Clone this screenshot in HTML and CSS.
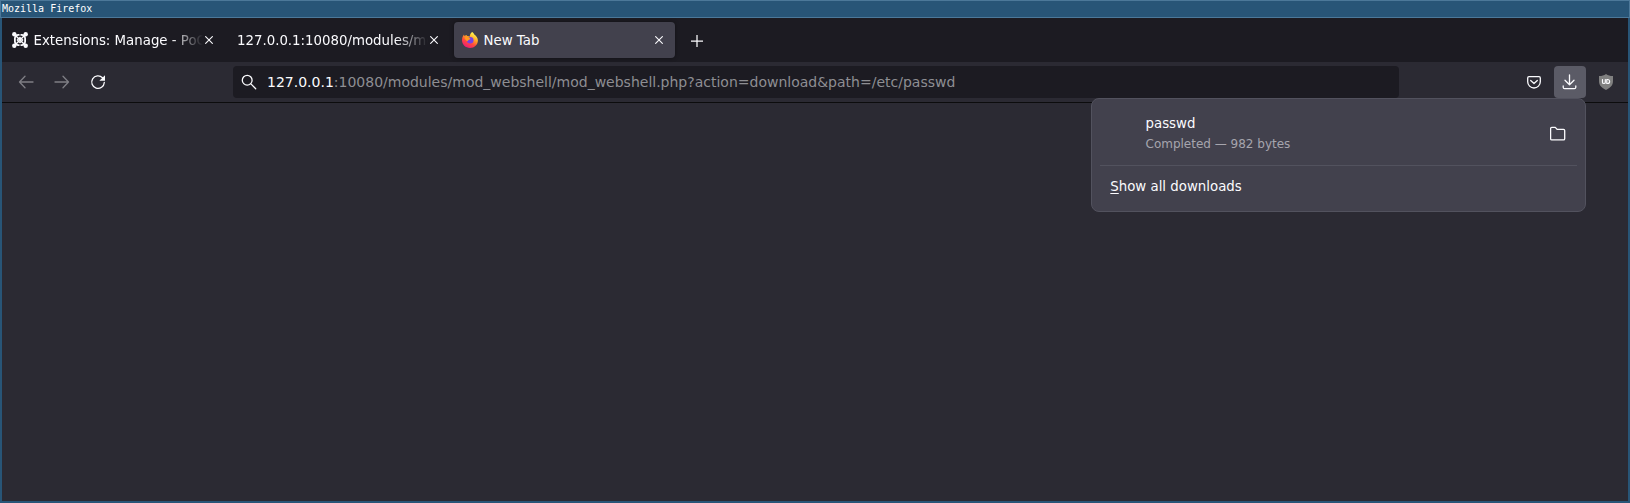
FILE: index.html
```
<!DOCTYPE html>
<html lang="en">
<head>
<meta charset="utf-8">
<title>Mozilla Firefox</title>
<link rel="stylesheet" href="styles.css">
</head>
<body>
<div class="window">
  <header class="titlebar">Mozilla Firefox</header>
  <div class="frame">
    <nav class="tabs">
      <div class="tab tab-first">
        <svg class="favicon" viewBox="0 0 16 16" fill="none" stroke="#fbfbfe" stroke-width="1.8"><rect x="2.900" y="2.900" width="10.200" height="10.200" rx="3.500"/><path d="M4 4l8 8M12 4l-8 8" stroke-width="1.500"/><path d="M8 5.300L10.700 8 8 10.700 5.300 8z" stroke-width="1.200"/><path d="M8 1v3.500M8 11.500V15" stroke="#1c1b22" stroke-width="1"/><g fill="#fbfbfe" stroke="none"><circle cx="2.300" cy="2.300" r="2.200"/><circle cx="13.700" cy="2.300" r="2.200"/><circle cx="2.300" cy="13.700" r="2.200"/><circle cx="13.700" cy="13.700" r="2.200"/></g></svg>
        <span class="label fade">Extensions: Manage - PoC</span>
        <svg class="close" viewBox="0 0 8 8"><path d="M.3.3l7.400 7.400M7.700.3L.3 7.700"/></svg>
      </div>
      <div class="tab tab-second">
        <span class="label fade">127.0.0.1:10080/modules/mo</span>
        <svg class="close" viewBox="0 0 8 8"><path d="M.3.3l7.400 7.400M7.700.3L.3 7.700"/></svg>
      </div>
      <div class="tab tab-active">
        <svg class="favicon" viewBox="0 0 16 16">
          <defs>
            <linearGradient id="flame" x1=".8" y1="0" x2=".25" y2="1"><stop offset=".1" stop-color="#fff44f"/><stop offset=".4" stop-color="#ffa225"/><stop offset=".65" stop-color="#ff4a3d"/><stop offset="1" stop-color="#e7157f"/></linearGradient>
          </defs>
          <path fill="url(#flame)" d="M10.300 0c1 .7 1.700 1.600 2 2.500C14.500 4 15.900 6 15.900 8.500 15.900 12.700 12.400 16 8 16S0 12.700 0 8.300C0 6 .8 4 2 2.600L2.400 4 4.300 3.100l1 .9c1 0 1.800.2 2.600.5C7.600 2.700 8.700 1 10.300 0z"/>
          <circle cx="8.200" cy="8.300" r="3.300" fill="#7542e5"/>
          <path fill="#ff9a1f" d="M2.500 5.500c1.500-1 3.600-.8 5 .3L8.500 7 6.500 8l-1 1.300C4 8.500 3 7.500 2.500 5.500z"/>
        </svg>
        <span class="label">New Tab</span>
        <svg class="close" viewBox="0 0 8 8"><path d="M.3.3l7.400 7.400M7.700.3L.3 7.700"/></svg>
      </div>
      <svg class="new-tab" viewBox="0 0 12 12"><path d="M6 0v12M0 6h12"/></svg>
    </nav>
    <div class="toolbar">
      <div class="nav">
        <svg class="icon dim" viewBox="0 0 16 16"><path d="M15 8H1.500M7 2.300L1.500 8 7 13.700"/></svg>
        <svg class="icon dim" viewBox="0 0 16 16"><path d="M1 8h13.500M9 2.300L14.500 8 9 13.700"/></svg>
        <svg class="icon reload" viewBox="0 0 16 16"><path d="M12.500 3.700A6.300 6.300 0 1 0 14.300 8.500"/><path class="solid" d="M15 1.200v5.600H9.400z"/></svg>
      </div>
      <div class="urlbar">
        <svg class="icon search" viewBox="0 0 16 16"><circle cx="6.200" cy="6.200" r="4.900"/><path d="M9.900 9.900l4.800 4.800"/></svg>
        <span class="url"><b>127.0.0.1</b>:10080/modules/mod_webshell/mod_webshell.php?action=download&amp;path=/etc/passwd</span>
      </div>
      <div class="actions">
        <svg class="icon pocket" viewBox="0 0 16 16"><path d="M3 2.700h10q1.300 0 1.300 1.300v3.700a6.300 6.300 0 0 1-12.600 0V4Q1.700 2.700 3 2.700zM4.700 6.500L8 9.500l3.300-3"/></svg>
        <div class="download"><svg class="icon" viewBox="0 0 16 16"><path d="M7.500.8v10M3 6.300l4.500 4.500L12 6.300M1.200 12v1.200q0 1.500 1.500 1.500h9.600q1.500 0 1.500-1.500V12"/></svg></div>
        <svg class="icon shield" viewBox="0 0 16 16"><path class="body" d="M8 0c2 1.500 4 2 7 2v5c0 4-2 6.500-7 9-5-2.500-7-5-7-9V2c3 0 5-.5 7-2z"/><path class="mark" d="M4.500 5.500v2.700q0 1.300 1.400 1.300t1.400-1.300V5.500M8.800 5.500v4h.8a2 2 0 0 0 0-4z"/></svg>
      </div>
    </div>
    <main class="page"></main>
    <aside class="panel">
      <div class="item">
        <div class="info"><div class="name">passwd</div><div class="status">Completed — 982 bytes</div></div>
        <svg class="icon" viewBox="0 0 16 16"><path d="M.6 12.700V2.600q0-1.200 1.200-1.200h3.500l1.800 2h6.400q1.200 0 1.200 1.200v8.100q0 1.200-1.200 1.200H1.800Q.6 13.900.6 12.700z"/></svg>
      </div>
      <div class="all"><u>S</u>how all downloads</div>
    </aside>
  </div>
</div>
</body>
</html>
```
FILE: styles.css
```
* { box-sizing: border-box; }
body { margin: 0; font-family: "DejaVu Sans", sans-serif; color: #fbfbfe; background: #2b2a33; overflow: hidden; }
svg { display: block; flex: none; }
.window { width: 1630px; height: 503px; display: flex; flex-direction: column; background: #285577; }
.titlebar { height: 18px; border: 1px solid #4c7899; padding-left: 1px; font: 10px/15px "DejaVu Sans Mono", monospace; color: #fff; }
.frame { position: relative; flex: 1; margin: 0 2px 2px; display: flex; flex-direction: column; background: #2b2a33; }
.tabs { height: 44px; display: flex; align-items: center; background: #1c1b22; }
.tab { height: 36px; display: flex; align-items: center; font-size: 13.333px; border-radius: 4px; }
.tab-first { width: 225px; padding-left: 10px; }
.tab-second { width: 221px; padding-left: 10px; margin-right: 6px; }
.tab-active { width: 221px; padding-left: 8px; background: #42414d; box-shadow: 0 0 4px rgba(0, 0, 0, .4); }
.favicon { width: 16px; height: 16px; margin-right: 6px; }
.label { white-space: nowrap; overflow: hidden; line-height: 20px; padding-top: 2px; width: 170px; margin-left: -.5px; }
.tab-first .label { width: 169px; }
.tab-second .label { width: 191px; margin-left: 0; }
.fade { -webkit-mask-image: linear-gradient(to left, transparent, #000 32px); mask-image: linear-gradient(to left, transparent, #000 32px); }
.close { width: 8px; height: 8px; fill: none; stroke: #fbfbfe; stroke-width: 1.1; }
.tab-first .close { margin-left: 2px; }
.tab-second .close { margin-left: 2px; }
.tab-active .close { margin-left: 1.500px; }
.new-tab { width: 12px; height: 12px; margin: 1px 0 0 15.500px; stroke: #fbfbfe; stroke-width: 1.25; }
.toolbar { height: 41px; display: flex; align-items: flex-start; padding-top: 4px; border-bottom: 1px solid #0c0c0d; }
.icon { width: 16px; height: 16px; fill: none; stroke: #fbfbfe; stroke-width: 1.3; stroke-linecap: round; stroke-linejoin: round; }
.nav { width: 231px; height: 32px; display: flex; align-items: center; gap: 20px; padding-left: 16px; }
.dim { opacity: .4; }
.solid { fill: #fbfbfe; stroke: none; }
.urlbar { width: 1166px; height: 32px; display: flex; align-items: center; padding-left: 8px; background: #1c1b22; border-radius: 4px; }
.url { margin-left: 10px; font-size: 14px; line-height: 24px; color: #8e8e93; white-space: pre; }
.url b { font-weight: normal; color: #fbfbfe; }
.actions { display: flex; align-items: center; margin-left: 127px; }
.download { width: 32px; height: 32px; margin: 0 12px; display: grid; place-items: center; border-radius: 4px; background: #5b5b66; }
.body { fill: #808080; stroke: none; }
.mark { stroke-width: 1.2; }
.page { flex: 1; }
.panel { position: absolute; left: 1089px; top: 80px; width: 495px; height: 114px; background: #42414d; border: 1px solid #52525e; border-radius: 8px; padding: 0 8px; }
.item { height: 67px; display: flex; justify-content: space-between; align-items: center; padding: 3px 11px 0 45.500px; border-bottom: 1px solid #52525e; }
.name { font-size: 13.333px; line-height: 20px; }
.status { font-size: 12px; line-height: 20px; color: #a6a5ad; }
.all { padding-left: 10.300px; font-size: 13.333px; line-height: 41px; }
.all u { text-underline-offset: 2px; }
```
